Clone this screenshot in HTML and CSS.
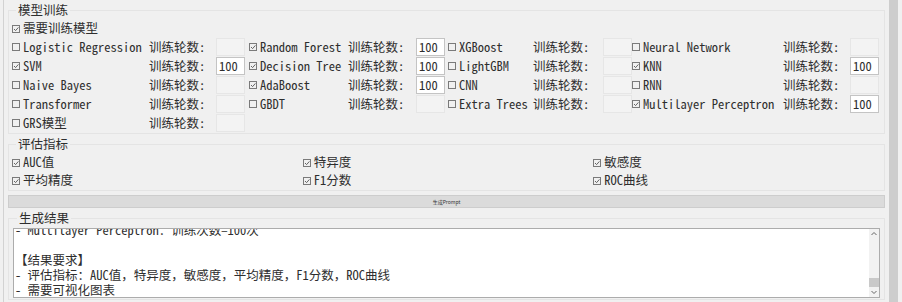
FILE: index.html
```html
<!DOCTYPE html>
<html lang="zh-CN">
<head>
  <meta charset="UTF-8" />
  <meta name="viewport" content="width=device-width, initial-scale=1.0"/>
  <title>模型训练 Prompt 生成器</title>
  <link rel="stylesheet" href="styles.css">
</head>
<body>
  <svg width="0" height="0" class="defs">
    <symbol id="off" viewBox="0 0 9 9">
      <rect x="0.5" y="1.5" width="7" height="7" fill="none" stroke="#7a7a7a"/>
    </symbol>
    <symbol id="on" viewBox="0 0 9 9">
      <rect x="0.5" y="1.5" width="7" height="7" fill="none" stroke="#7a7a7a"/>
      <path d="M2 5 L3.6 6.6 L6.4 3.4" fill="none" stroke="#555" stroke-width="0.9"/>
    </symbol>
  </svg>

  <div class="window">
    <div class="content">

      <fieldset class="group">
        <legend>模型训练</legend>
        <div class="model-grid">
          <label class="check wide"><svg class="cb"><use href="#on"/></svg>需要训练模型</label>

          <label class="check"><svg class="cb"><use href="#off"/></svg>Logistic Regression</label>
          <span class="epoch-label">训练轮数:</span>
          <input class="epoch" type="text" value="" disabled>
          <label class="check"><svg class="cb"><use href="#on"/></svg>Random Forest</label>
          <span class="epoch-label">训练轮数:</span>
          <input class="epoch" type="text" value="100">
          <label class="check"><svg class="cb"><use href="#off"/></svg>XGBoost</label>
          <span class="epoch-label">训练轮数:</span>
          <input class="epoch" type="text" value="" disabled>
          <label class="check"><svg class="cb"><use href="#off"/></svg>Neural Network</label>
          <span class="epoch-label">训练轮数:</span>
          <input class="epoch" type="text" value="" disabled>

          <label class="check"><svg class="cb"><use href="#on"/></svg>SVM</label>
          <span class="epoch-label">训练轮数:</span>
          <input class="epoch" type="text" value="100">
          <label class="check"><svg class="cb"><use href="#on"/></svg>Decision Tree</label>
          <span class="epoch-label">训练轮数:</span>
          <input class="epoch" type="text" value="100">
          <label class="check"><svg class="cb"><use href="#off"/></svg>LightGBM</label>
          <span class="epoch-label">训练轮数:</span>
          <input class="epoch" type="text" value="" disabled>
          <label class="check"><svg class="cb"><use href="#on"/></svg>KNN</label>
          <span class="epoch-label">训练轮数:</span>
          <input class="epoch" type="text" value="100">

          <label class="check"><svg class="cb"><use href="#off"/></svg>Naive Bayes</label>
          <span class="epoch-label">训练轮数:</span>
          <input class="epoch" type="text" value="" disabled>
          <label class="check"><svg class="cb"><use href="#on"/></svg>AdaBoost</label>
          <span class="epoch-label">训练轮数:</span>
          <input class="epoch" type="text" value="100">
          <label class="check"><svg class="cb"><use href="#off"/></svg>CNN</label>
          <span class="epoch-label">训练轮数:</span>
          <input class="epoch" type="text" value="" disabled>
          <label class="check"><svg class="cb"><use href="#off"/></svg>RNN</label>
          <span class="epoch-label">训练轮数:</span>
          <input class="epoch" type="text" value="" disabled>

          <label class="check"><svg class="cb"><use href="#off"/></svg>Transformer</label>
          <span class="epoch-label">训练轮数:</span>
          <input class="epoch" type="text" value="" disabled>
          <label class="check"><svg class="cb"><use href="#off"/></svg>GBDT</label>
          <span class="epoch-label">训练轮数:</span>
          <input class="epoch" type="text" value="" disabled>
          <label class="check"><svg class="cb"><use href="#off"/></svg>Extra Trees</label>
          <span class="epoch-label">训练轮数:</span>
          <input class="epoch" type="text" value="" disabled>
          <label class="check"><svg class="cb"><use href="#on"/></svg>Multilayer Perceptron</label>
          <span class="epoch-label">训练轮数:</span>
          <input class="epoch" type="text" value="100">

          <label class="check"><svg class="cb"><use href="#off"/></svg>GRS模型</label>
          <span class="epoch-label">训练轮数:</span>
          <input class="epoch" type="text" value="" disabled>
        </div>
      </fieldset>

      <fieldset class="group">
        <legend>评估指标</legend>
        <div class="metric-grid">
          <label class="check"><svg class="cb"><use href="#on"/></svg>AUC值</label>
          <label class="check"><svg class="cb"><use href="#on"/></svg>特异度</label>
          <label class="check"><svg class="cb"><use href="#on"/></svg>敏感度</label>
          <label class="check"><svg class="cb"><use href="#on"/></svg>平均精度</label>
          <label class="check"><svg class="cb"><use href="#on"/></svg>F1分数</label>
          <label class="check"><svg class="cb"><use href="#on"/></svg>ROC曲线</label>
        </div>
      </fieldset>

      <button class="generate">生成Prompt</button>

      <fieldset class="group result">
        <legend>生成结果</legend>
        <div class="output">
          <div class="output-text">
            <div class="lines">请根据以下配置生成机器学习模型训练与评估代码：

【模型训练】
- Random Forest：训练次数=100次
- SVM：训练次数=100次
- Decision Tree：训练次数=100次
- KNN：训练次数=100次
- AdaBoost：训练次数=100次
- Multilayer Perceptron：训练次数=100次

【结果要求】
- 评估指标：AUC值，特异度，敏感度，平均精度，F1分数，ROC曲线
- 需要可视化图表</div>
          </div>
          <div class="sbar">
            <svg class="arrow" viewBox="0 0 10 10"><path d="M2.5 6 L5 3.5 L7.5 6" fill="none" stroke="#666" stroke-width="1"/></svg>
            <div class="track"><div class="thumb"></div></div>
            <svg class="arrow" viewBox="0 0 10 10"><path d="M2.5 4 L5 6.5 L7.5 4" fill="none" stroke="#666" stroke-width="1"/></svg>
          </div>
        </div>
      </fieldset>

    </div>
    <div class="page-scroll"></div>
  </div>
</body>
</html>
```

FILE: styles.css
```css
* {
  box-sizing: border-box;
}

body {
  margin: 0;
  background: #f0f0f0;
  color: #2e2e2e;
  font-family: "Noto Sans Mono CJK SC", "Noto Sans CJK SC", monospace;
  font-size: 12.5px;
}

.defs {
  position: absolute;
}

.window {
  display: flex;
  height: 302px;
  overflow: hidden;
}

.content {
  flex: 1;
  margin-left: 3px;
  border-left: 1px solid #d2d2d2;
  padding: 0 4px;
}

.page-scroll {
  width: 9px;
  margin-right: 4px;
  background: #cdcdcd;
}

.group {
  margin: 2px 0 0;
  padding: 1px 0 1px 3px;
  border: 1px solid #e4e4e4;
  min-width: 0;
}

.group legend {
  margin-left: 4px;
  padding: 0 2px;
  line-height: 15px;
  height: 16px;
}

.check {
  display: flex;
  align-items: center;
  white-space: nowrap;
  line-height: 14px;
}

.cb {
  width: 9px;
  height: 9px;
  margin-right: 2px;
  flex: none;
}

.model-grid {
  display: grid;
  grid-template-columns: 137px 67px 33px 99px 68px 32px 85px 70px 29px 151px 67px 33px;
  grid-template-rows: 18px repeat(5, 19px);
  align-items: center;
}

.model-grid .wide {
  grid-column: 1 / -1;
}

.epoch-label {
  white-space: nowrap;
  line-height: 14px;
}

.epoch {
  width: 29px;
  height: 18px;
  padding: 0 0 0 2px;
  font: inherit;
  color: #2e2e2e;
  background: #fff;
  border: 1px solid #c4c4c4;
  outline: none;
}

.epoch:disabled {
  background: #f3f3f3;
  border-color: #e6e6e6;
}

.metric-grid {
  display: grid;
  grid-template-columns: repeat(3, 1fr);
  grid-auto-rows: 18px;
  align-items: center;
}

.generate {
  display: block;
  width: 100%;
  height: 13px;
  margin-top: 4px;
  padding: 0;
  background: #dbdbdb;
  border: 1px solid #cdcdcd;
  font-family: "Noto Sans CJK SC", sans-serif;
  font-size: 5px;
  line-height: 11px;
  color: #333;
}

.result {
  padding: 2px 4px 1px 4px;
}

.output {
  display: flex;
  height: 70px;
  background: #fff;
  border: 1px solid #acacac;
}

.output-text {
  flex: 1;
  overflow: hidden;
  display: flex;
  flex-direction: column;
  justify-content: flex-end;
  padding-left: 1px;
}

.lines {
  white-space: pre;
  line-height: 15px;
}

.sbar {
  width: 10px;
  display: flex;
  flex-direction: column;
  background: #f2f2f2;
}

.arrow {
  width: 10px;
  height: 10px;
  flex: none;
}

.track {
  flex: 1;
  display: flex;
  flex-direction: column;
  justify-content: flex-end;
}

.thumb {
  height: 9px;
  background: #c9c9c9;
}
```
